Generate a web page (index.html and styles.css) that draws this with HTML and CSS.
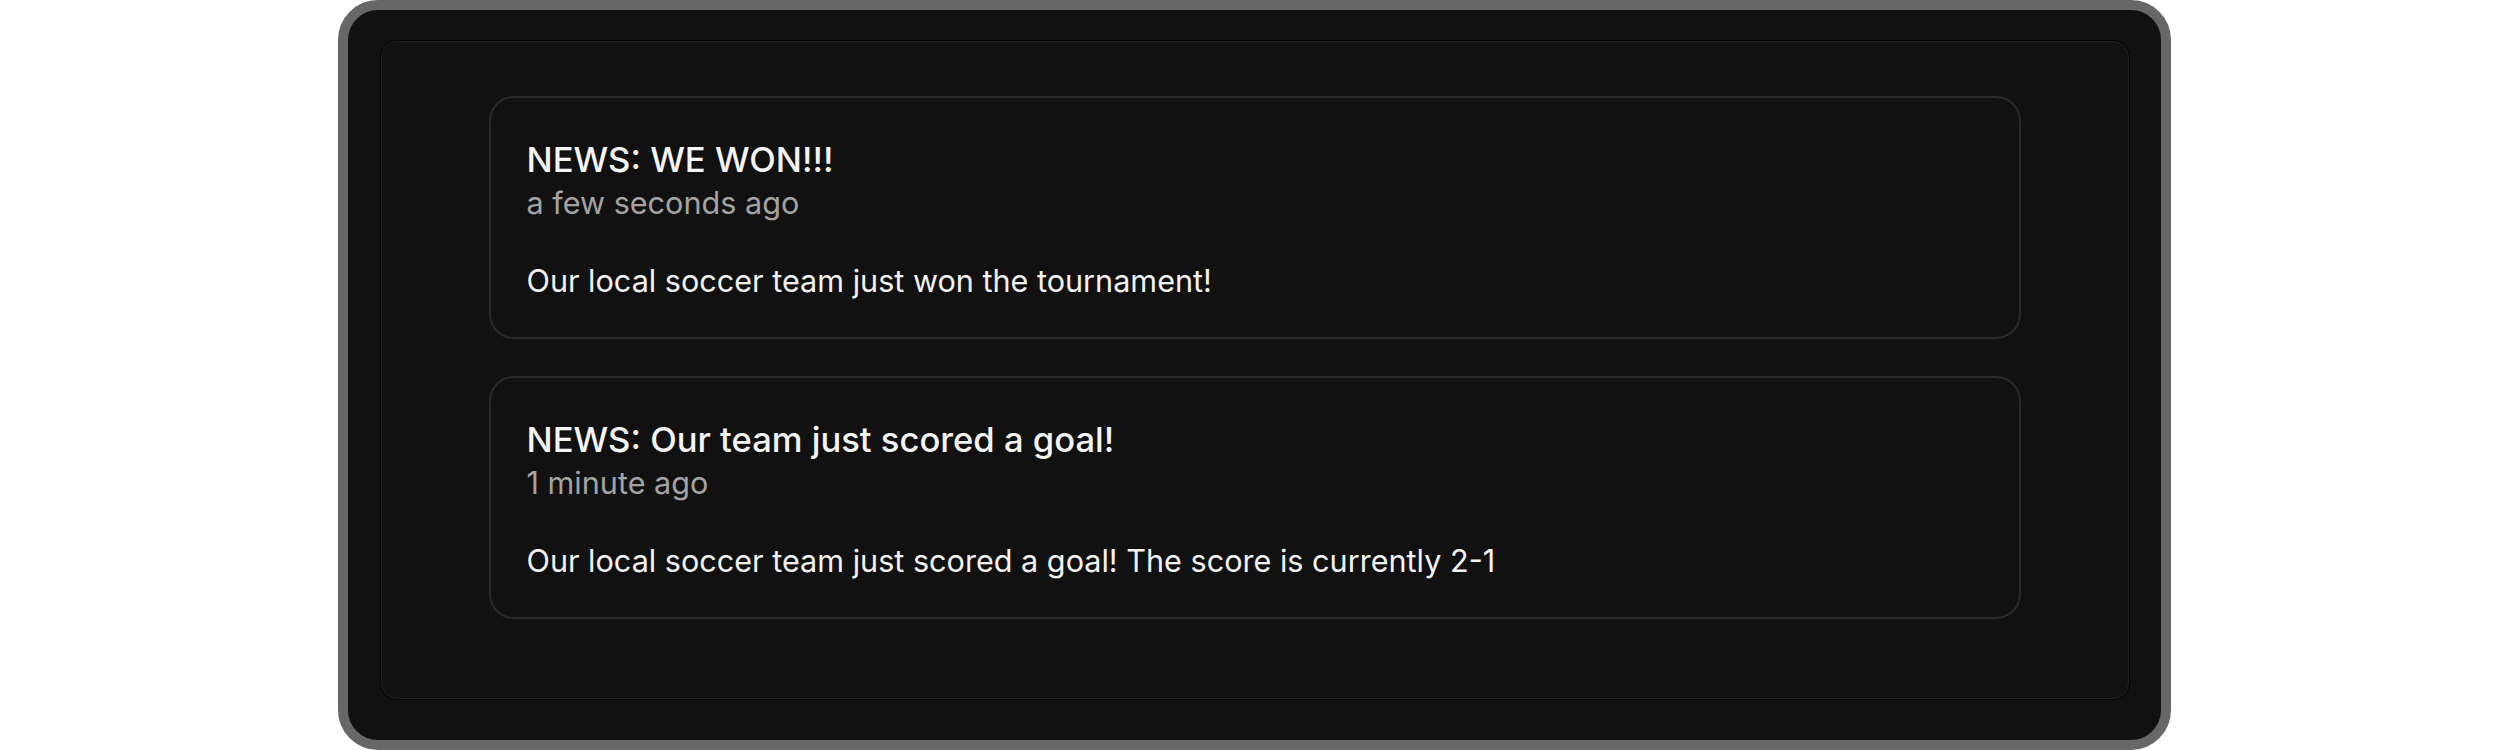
FILE: index.html
```html
<!DOCTYPE html>
<html>
<head>
<meta charset="utf-8">
<link rel="stylesheet" href="styles.css">
</head>
<body>
<div class="frame">
  <div class="panel">
    <div class="feed">
      <article class="card">
        <h2 class="title">NEWS: WE WON!!!</h2>
        <div class="time">a few seconds ago</div>
        <p class="text">Our local soccer team just won the tournament!</p>
      </article>
      <article class="card">
        <h2 class="title">NEWS: Our team just scored a goal!</h2>
        <div class="time">1 minute ago</div>
        <p class="text">Our local soccer team just scored a goal! The score is currently 2-1</p>
      </article>
    </div>
  </div>
</div>
</body>
</html>
```

FILE: styles.css
```css
html, body {
  margin: 0;
  padding: 0;
  background: #ffffff;
  font-family: Inter, "Noto Sans", sans-serif;
}
.frame {
  box-sizing: border-box;
  width: 1833px;
  height: 750px;
  margin: 0 auto;
  border: 10px solid #676767;
  border-radius: 40px;
  background: #111111;
  padding: 31px 32px 41px 33px;
}
.panel {
  box-sizing: border-box;
  height: 100%;
  border: 1px solid #1e1e1e;
  box-shadow: 0 0 0 1px #050505;
  border-radius: 16px;
  padding: 54px 107px 0 107px;
}
.feed {
  display: flex;
  flex-direction: column;
  gap: 37px;
}
.card {
  border: 2px solid #2a2a2a;
  border-radius: 25px;
  padding: 37.1px 36px 33.1px 36px;
}
.title {
  margin: 0;
  font-size: 34.6px;
  font-weight: 500;
  line-height: 48px;
  color: #f4f4f4;
}
.time {
  font-size: 30.6px;
  line-height: 39.5px;
  color: #a3a3a3;
}
.text {
  margin: 35.3px 0 0 0;
  font-size: 30.6px;
  line-height: 46px;
  color: #f2f2f2;
}
```
